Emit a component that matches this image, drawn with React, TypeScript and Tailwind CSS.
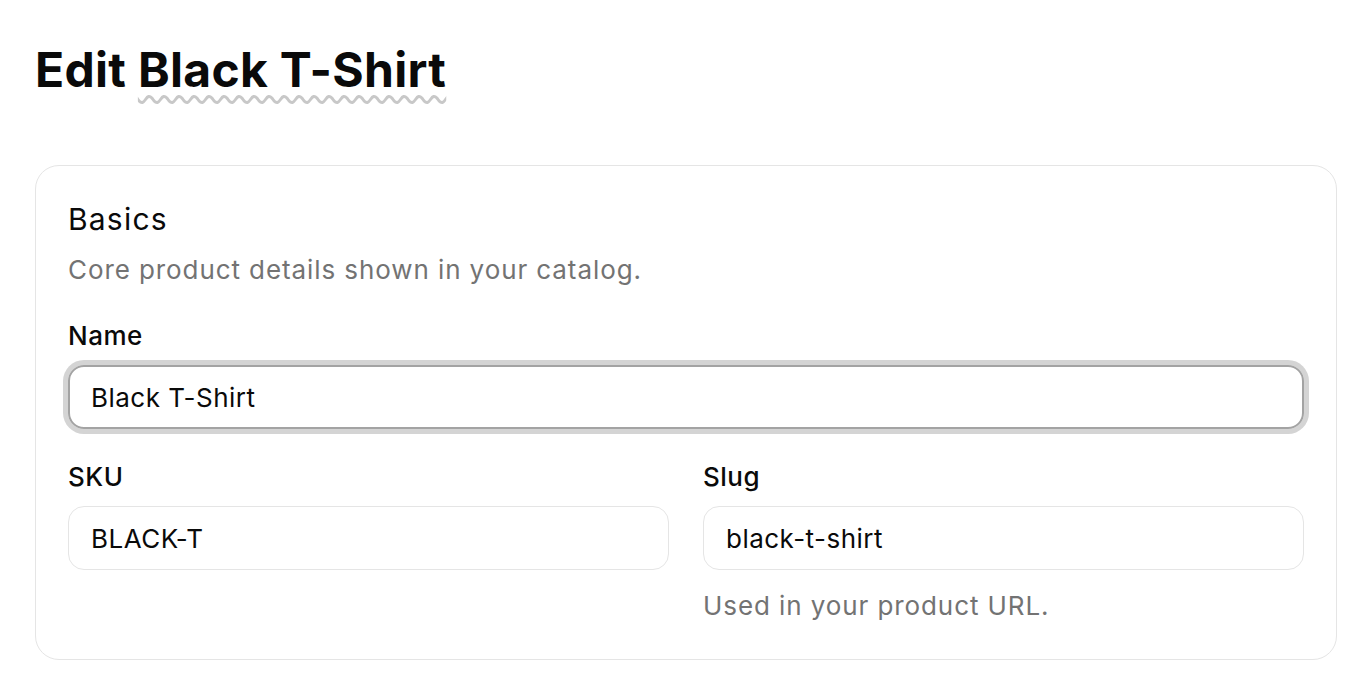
import { useEffect, useRef, useState } from "react";

export default function App() {
  const [name, setName] = useState("Black T-Shirt");
  const [sku, setSku] = useState("BLACK-T");
  const [slug, setSlug] = useState("black-t-shirt");
  const nameRef = useRef<HTMLInputElement>(null);

  useEffect(() => {
    const el = nameRef.current;
    if (!el) return;
    el.focus();
    el.setSelectionRange(el.value.length, el.value.length);
  }, []);

  return (
    <div className="min-h-screen bg-white px-[35px] pt-[46px] font-['Inter',sans-serif] text-[#0a0a0a]">
      <h1 className="text-[48px] leading-[48px] font-bold tracking-[0.3px]">
        Edit{" "}
        <span className="underline decoration-wavy decoration-[#c8c8c8] decoration-[3px] underline-offset-[8px]">
          Black T-Shirt
        </span>
      </h1>

      <form className="mt-[71px] w-[1302px] rounded-[24px] border border-[#e5e5e5] px-[32px] pt-[33px] pb-[35px] tracking-[0.03em]">
        <h2 className="text-[30px] leading-[40px] font-normal tracking-[0.04em]">Basics</h2>
        <p className="mt-[13px] text-[26px] leading-[36px] text-[#737373] tracking-[0.035em]">
          Core product details shown in your catalog.
        </p>

        <div className="mt-[30px]">
          <label htmlFor="name" className="block text-[26px] leading-[36px] font-medium">
            Name
          </label>
          <input
            id="name"
            ref={nameRef}
            value={name}
            onChange={(e) => setName(e.target.value)}
            className="mt-[11px] block h-[64px] w-full rounded-[16px] border-2 border-[#a3a3a3] px-[21px] text-[26px] caret-black outline-none ring-[5px] ring-[#d4d4d4]"
          />
        </div>

        <div className="mt-[30px] grid grid-cols-2 gap-[34px]">
          <div>
            <label htmlFor="sku" className="block text-[26px] leading-[36px] font-medium">
              SKU
            </label>
            <input
              id="sku"
              value={sku}
              onChange={(e) => setSku(e.target.value)}
              className="mt-[11px] block h-[64px] w-full rounded-[16px] border border-[#e5e5e5] px-[22px] text-[26px] outline-none"
            />
          </div>
          <div>
            <label htmlFor="slug" className="block text-[26px] leading-[36px] font-medium">
              Slug
            </label>
            <input
              id="slug"
              value={slug}
              onChange={(e) => setSlug(e.target.value)}
              className="mt-[11px] block h-[64px] w-full rounded-[16px] border border-[#e5e5e5] px-[22px] text-[26px] outline-none"
            />
            <p className="mt-[18px] text-[26px] leading-[36px] text-[#737373] tracking-[0.035em]">
              Used in your product URL.
            </p>
          </div>
        </div>
      </form>
    </div>
  );
}
